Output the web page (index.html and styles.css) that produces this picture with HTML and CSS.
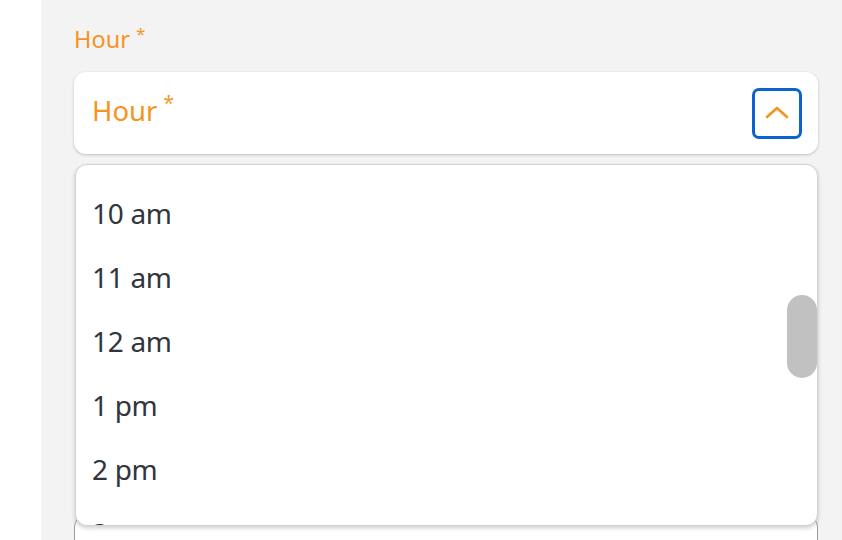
FILE: index.html
```html
<!DOCTYPE html>
<html lang="en">
<head>
<meta charset="utf-8">
<title>Hour select</title>
<link rel="stylesheet" href="styles.css">
</head>
<body>
<div class="page">
  <div class="sidebar"></div>
  <main class="main">
    <div class="field">
      <label class="label">Hour<span class="req">*</span></label>
      <div class="select-wrap">
        <div class="select">
          <span class="placeholder">Hour<span class="req">*</span></span>
          <button class="toggle" type="button" aria-label="Close">
            <svg width="24" height="14" viewBox="0 0 24 14"><path d="M2 12 L12 3 L22 12" fill="none" stroke="#f7931e" stroke-width="2.6" stroke-linecap="round" stroke-linejoin="round"/></svg>
          </button>
        </div>
        <div class="dropdown">
          <ul class="options">
            <li class="option">10 am</li>
            <li class="option">11 am</li>
            <li class="option">12 am</li>
            <li class="option">1 pm</li>
            <li class="option">2 pm</li>
            <li class="option">3 pm</li>
          </ul>
          <div class="thumb"></div>
        </div>
      </div>
    </div>
    <div class="field field-next">
      <div class="select select-plain"></div>
    </div>
  </main>
</div>
</body>
</html>
```
FILE: styles.css
```css
html, body {
  margin: 0;
  padding: 0;
  background: #ffffff;
  font-family: "Noto Sans", "Open Sans", sans-serif;
}
.page {
  display: flex;
  width: 842px;
  height: 540px;
  overflow: hidden;
}
.sidebar {
  width: 41px;
  flex: none;
  background: #ffffff;
}
.main {
  flex: 1;
  background: #f3f3f3;
  padding: 24px 24px 0 33px;
  box-sizing: border-box;
}
.field {
  display: flex;
  flex-direction: column;
}
.label {
  color: #f7931e;
  font-size: 23.5px;
  line-height: 31px;
  margin-bottom: 17px;
}
.req {
  font-size: 17px;
  vertical-align: top;
  line-height: 17px;
  margin-left: 6px;
  position: relative;
  top: 1px;
}
.select-wrap {
  position: relative;
}
.select {
  height: 82px;
  box-sizing: border-box;
  background: #ffffff;
  border-radius: 12px;
  box-shadow: 0 1px 3px rgba(0, 0, 0, 0.22);
  display: flex;
  align-items: center;
  justify-content: space-between;
  padding: 0 16px 0 18px;
}
.placeholder {
  color: #f7931e;
  font-size: 27.5px;
  line-height: 32px;
  position: relative;
  top: -2px;
}
.placeholder .req {
  font-size: 19px;
  margin-left: 6px;
  top: 0;
}
.toggle {
  width: 50px;
  height: 51px;
  box-sizing: border-box;
  border: 3px solid #0a63d1;
  border-radius: 7px;
  background: #ffffff;
  padding: 0;
  display: flex;
  align-items: center;
  justify-content: center;
}
.toggle svg {
  display: block;
  margin-top: -2px;
}
.dropdown {
  position: absolute;
  left: 1px;
  right: 0;
  top: 92px;
  height: 362px;
  box-sizing: border-box;
  background: #ffffff;
  border: 1px solid #cfd2d6;
  border-radius: 12px;
  box-shadow: 0 2px 4px rgba(0, 0, 0, 0.2);
  overflow: hidden;
  z-index: 2;
}
.options {
  list-style: none;
  margin: 0;
  padding: 16px 0 0 0;
}
.option {
  height: 64px;
  line-height: 64px;
  padding-left: 16px;
  font-size: 28px;
  letter-spacing: -0.3px;
  color: #31353b;
}
.thumb {
  position: absolute;
  right: 0;
  top: 130px;
  width: 30px;
  height: 83px;
  border-radius: 15px;
  background: #c1c1c1;
}
.field-next {
  margin-top: 361px;
}
.select-plain {
  border: 1px solid #9a9a9a;
  box-shadow: none;
}
```
